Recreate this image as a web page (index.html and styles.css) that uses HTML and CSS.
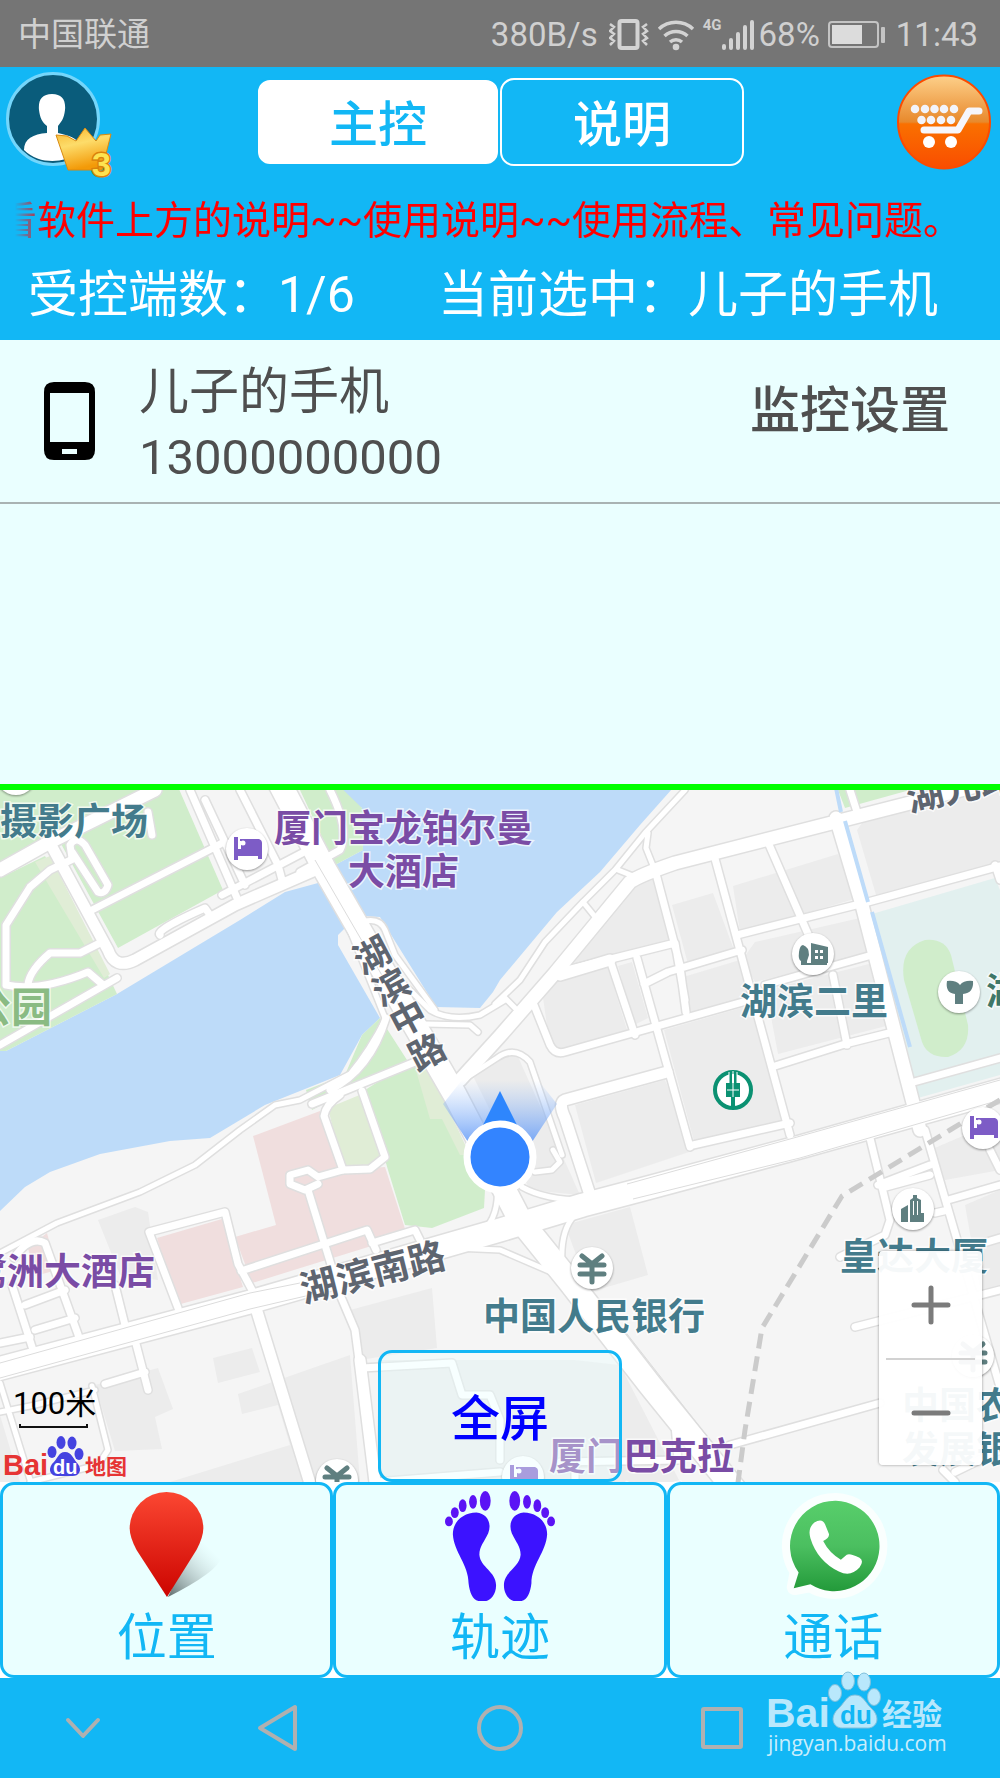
FILE: index.html
```html
<!DOCTYPE html>
<html lang="zh-CN">
<head>
    <meta charset="UTF-8">
    <meta name="viewport" content="width=device-width, initial-scale=1.0">
    <title>主控</title>
    <link rel="stylesheet" href="styles.css">
</head>
<body>
<div class="app">

    <div class="status-bar">
        <span class="carrier">中国联通</span>
        <span>380B/s</span>
        <svg class="vibrate" width="40" height="32" viewBox="0 0 40 32">
            <rect x="10.500" y="2" width="18" height="27" rx="2" fill="none" stroke="#d3d3d3" stroke-width="4"/>
            <path d="M1 5l4 3-4 4 4 3-4 4 4 3-4 4M38 5l-4 3 4 4-4 3 4 4-4 3 4 4" fill="none" stroke="#d3d3d3" stroke-width="2.500"/>
        </svg>
        <svg class="wifi" width="38" height="32" viewBox="0 0 38 32">
            <g fill="none" stroke="#d3d3d3" stroke-width="3.500">
                <path d="M2 10a25 25 0 0 1 34 0"/>
                <path d="M7.500 17a17 17 0 0 1 23 0"/>
                <path d="M13 23a9 9 0 0 1 12 0"/>
            </g>
            <circle cx="19" cy="28" r="3.300" fill="#d3d3d3"/>
        </svg>
        <span class="net">4G</span>
        <svg class="signal" width="32" height="32" viewBox="0 0 32 32">
            <path d="M2 27v2M9 21v8M16 15v14M23 8v21M30 3v26" stroke="#d3d3d3" stroke-width="4" stroke-linecap="round"/>
        </svg>
        <span>68%</span>
        <svg class="battery" width="58" height="28" viewBox="0 0 58 28">
            <rect x="1" y="1" width="49" height="25" rx="3" fill="none" stroke="#c4c4c4" stroke-width="2"/>
            <rect x="4" y="4" width="30" height="19" fill="#dcdcdc"/>
            <rect x="53" y="6" width="4" height="16" rx="1" fill="#c4c4c4"/>
        </svg>
        <span>11:43</span>
    </div>

    <header class="header">
        <div class="top-row">
            <a href="#user" class="avatar" aria-label="用户">
                <svg width="120" height="116" viewBox="0 0 120 116">
                    <defs>
                        <linearGradient id="crown" x1="0" y1="0" x2="0.300" y2="1">
                            <stop offset="0" stop-color="#f7b52c"/>
                            <stop offset="0.450" stop-color="#fddc6a"/>
                            <stop offset="1" stop-color="#f39a08"/>
                        </linearGradient>
                        <clipPath id="face"><circle cx="53" cy="52" r="44"/></clipPath>
                    </defs>
                    <circle cx="53" cy="52" r="45.500" fill="#0a5c7b" stroke="#74d6fb" stroke-width="3"/>
                    <path clip-path="url(#face)" fill="#fff" d="M52 27c10 0 14 6 13 16-1 9-4 12-7 16v7c11 3 19 4 22 13l-4 8c-10 8-36 12-52-4 0-11 9-16 23-17v-7c-5-4-7-8-8-16-1-10 3-16 13-16z"/>
                    <path fill="url(#crown)" stroke="#d88a10" stroke-width="1" d="M56 68l11 1 9 5 9-13 11 13 4-6 11-1-9 36H68z"/>
                    <text x="92" y="109" class="rank">3</text>
                </svg>
            </a>
            <nav class="tabs">
                <button type="button" class="tab active">主控</button>
                <button type="button" class="tab">说明</button>
            </nav>
            <a href="#shop" class="cart" aria-label="购物车">
                <svg width="94" height="96" viewBox="0 0 94 96">
                    <defs>
                        <linearGradient id="orange" x1="0" y1="0" x2="0" y2="1">
                            <stop offset="0" stop-color="#fdd08a"/>
                            <stop offset="0.500" stop-color="#e8892c"/>
                            <stop offset="0.520" stop-color="#fa7000"/>
                            <stop offset="1" stop-color="#f94d00"/>
                        </linearGradient>
                    </defs>
                    <ellipse cx="47" cy="48" rx="46" ry="46.500" fill="url(#orange)" stroke="#fb4b00" stroke-width="2"/>
                    <path d="M27 56h34l11-19h10" fill="none" stroke="#f6f6fb" stroke-width="7" stroke-linecap="round" stroke-linejoin="round"/>
                    <path d="M18 35h.01M28 35h.01M37.500 35h.01M47 35h.01M57 35h.01M24.500 46h.01M34 46h.01M44 46h.01M54 46h.01" stroke="#f2f4fb" stroke-width="8.500" stroke-linecap="round"/>
                    <circle cx="32" cy="68" r="6" fill="#fff"/>
                    <circle cx="54" cy="68" r="6" fill="#fff"/>
                </svg>
            </a>
        </div>
        <div class="notice"><p>看软件上方的说明~~使用说明~~使用流程、常见问题。</p></div>
        <div class="info-row">
            <span>受控端数：1/6</span>
            <span>当前选中：儿子的手机</span>
        </div>
    </header>

    <main class="main">
        <ul class="devices">
            <li class="device">
                <svg class="phone" width="51" height="78" viewBox="0 0 51 78">
                    <path fill="#000" fill-rule="evenodd" d="M10 0h31q10 0 10 10v58q0 10-10 10H10Q0 78 0 68V10Q0 0 10 0zM6 11v49h39V11zM18 67v5h15v-5z"/>
                </svg>
                <div class="device-text">
                    <div>儿子的手机</div>
                    <div class="number">13000000000</div>
                </div>
                <button type="button" class="setting">监控设置</button>
            </li>
        </ul>

        <section class="map">
            <svg class="map-canvas" viewBox="0 790 1000 692" preserveAspectRatio="xMidYMid slice">
                <defs>
                    <g id="thin">
                        <path d="M0 1253L57 1223 140 1192 195 1165 240 1130 275 1105 300 1100 350 1074Q370 1050 386 1018"/>
                        <path d="M495 1004L520 980 545 942 583 902 615 870 645 833 685 790"/>
                        <path d="M618 870L638 878M583 902L596 918M505 998L515 1008M648 833L646 848 654 868"/>
                        <path d="M325 865L380 960 430 1010Q450 1022 480 1015L505 1000"/>
                        <path d="M365 921Q380 918 385 930L395 955 435 1010"/>
                        <path d="M553 1150L560 1162 552 1170 535 1172"/>
                        <path d="M463 1080L497 1058Q515 1045 530 1062L562 1155"/>
                        <path d="M522 1187Q545 1200 585 1200M575 1215Q560 1230 562 1265M432 1247L500 1250 565 1278"/>
                        <path d="M497 1185Q500 1220 478 1235M350 930L385 1018M425 1024L470 1025 478 1032"/>
                        <path d="M0 1412L35 1405 95 1390M0 1383L32 1486M92 1386L108 1450 98 1465 30 1482"/>
                    </g>
                    <g id="minor">
                        <path d="M6 985V925L30 887 50 870 75 858M6 985Q40 992 88 972L102 984M28 984Q30 970 50 953L80 953 102 942M0 1045L117 978"/>
                        <path d="M72 858L70 845Q76 835 85 845L108 885Q105 895 98 892L72 852M92 910L215 847 222 843M148 812L152 835"/>
                        <path d="M190 790L237 898M240 790L278 865 282 880M205 800L245 885M222 895L308 850M160 935Q155 930 205 908L212 918M330 790Q350 830 340 850L300 872"/>
                        <path d="M386 1018Q370 1070 330 1090M312 1104L415 1062M362 1091L385 1157 370 1169 343 1170 324 1116Q326 1104 340 1095"/>
                        <path d="M343 1170L318 1177 308 1170 290 1175 290 1184 305 1190 318 1184M308 1190L341 1297 355 1330 375 1482"/>
                        <path d="M178 1308L149 1232 225 1212 238 1264 252 1290M241 1271L367 1230 376 1250M372 1243L415 1230 420 1240"/>
                        <path d="M14 1258Q30 1235 45 1243L80 1340M12 1285L33 1350M25 1305L65 1290M35 1330L75 1318M0 1343L30 1337M115 1285L125 1325"/>
                        <path d="M135 1340L148 1390M105 1384L145 1372M362 1368L452 1363 462 1395 490 1395 500 1420 500 1460"/>
                        <path d="M655 870L680 965M714 855L790 1135M767 840L815 950M555 973L675 943 685 1000M610 960L635 1035M637 958L690 1147M644 984L668 972 742 950M680 967L686 1012"/>
                        <path d="M737 935L868 902 1000 866M532 1000L550 1045Q555 1055 565 1052L750 1000M765 985L872 955M833 975L847 1045M775 1066L845 1044 893 1032M693 1145L790 1123M914 1082L1000 1058"/>
                        <path d="M995 865L1000 880M850 790L858 815M868 1130L890 1220 885 1235 840 1257M878 1185L930 1165M882 1188L930 1175M925 1130L1000 1387M948 1200L1000 1185M935 1213L948 1210M960 1250L1000 1238M855 1327L1000 1290"/>
                        <path d="M730 1445L880 1403M680 1460L560 1462M675 1425L678 1460M943 1470L955 1482M955 1472L1000 1450M990 1150L1000 1170M575 1478V1460M375 1482L500 1472"/>
                    </g>
                    <g id="street">
                        <path d="M667 1072L565 1100Q558 1103 565 1118L590 1195M560 975L610 960M255 1305L312 1490M360 1360L375 1482"/>
                        <path d="M51 845L108 950Q115 970 135 960L235 905 320 868"/>
                    </g>
                    <g id="avenue">
                        <path d="M0 870L50 842 155 790M460 1080L500 1036 555 973 630 882Q640 875 675 863L1000 780M836 818L862 905 920 1130"/>
                    </g>
                    <g id="main-road">
                        <path d="M278 780L325 870 455 1095 520 1220 570 1282 650 1385 735 1490"/>
                        <path d="M-10 1371L250 1302 500 1230 583 1205 640 1190 800 1147 1010 1088"/>
                    </g>
                    <g id="bed">
                        <circle r="21" class="pin"/>
                        <path d="M-13-12h4v12h3v-8h-1V-10H12q3 1 3 4v16h-4V7H-9v4h-4z"/>
                        <circle cx="-4" cy="-6" r="2.500" fill="#fff"/>
                    </g>
                    <g id="yen">
                        <circle r="21" class="pin"/>
                        <path d="M-10-12L0-4 10-12M0-4V14M-12-3H12M-12 6H12" class="yen-line"/>
                    </g>
                    <linearGradient id="beam" x1="0" y1="0" x2="0" y2="1">
                        <stop offset="0" stop-color="#8fb9f8" stop-opacity="0"/>
                        <stop offset="1" stop-color="#6ca0f7" stop-opacity="0.900"/>
                    </linearGradient>
                </defs>

                <rect x="-500" y="500" width="2000" height="1500" fill="#f5f5f5"/>

                <!-- water -->
                <g fill="#bddbf9">
                    <path d="M318 883L285 892 240 920 117 994 6 1051H-500V1211H0L25 1187 50 1172 100 1154 170 1141 210 1138 265 1105 340 1075 362 1035 380 1018 338 945 338 935 348 925z"/>
                    <path d="M333 780V790L362 808 363 850 335 865 363 916 380 917 436 1007 480 1008 493 992 500 980 557 912 600 872 640 825 680 780z"/>
                </g>

                <!-- parks -->
                <g fill="#d0edcb">
                    <path d="M0 780H175L223 890 118 948 60 842 0 870z"/>
                    <path d="M0 878L45 856 108 975 117 994 6 1051H0z"/>
                    <path d="M320 780H333L362 808 363 850 335 865 300 790z"/>
                    <path d="M380 1018L362 1035 345 1075 306 1090 312 1110 407 1060z"/>
                    <path d="M365 1090L413 1060 465 1155 485 1190 484 1208 432 1228 405 1225 388 1170z"/>
                    <path d="M838 790L845 808 910 790z"/>
                </g>
                <g fill="#e0edd6">
                    <path d="M35 862L50 856 110 974 104 978z"/>
                    <path d="M328 1108L362 1094 385 1155 370 1167 343 1170z"/>
                    <path d="M413 1060L430 1070 470 1155 460 1155 442 1119 430 1119z"/>
                </g>
                <path fill="#e2f0ef" d="M872 914L995 878 1000 890 1500 700V1075L1000 1075 918 1098z"/>
                <path fill="#d0edcb" d="M925 940Q945 938 951 955L968 1025Q970 1050 948 1057 928 1058 922 1042L904 980Q899 948 925 940z"/>

                <!-- built-up areas -->
                <g fill="#f0dede">
                    <path d="M253 1136L320 1111 343 1170 385 1167 407 1235 252 1283 235 1237 276 1225z"/>
                    <path d="M157 1238L222 1219 243 1287 177 1305zM28 1248L47 1233 57 1270 35 1276z"/>
                </g>
                <g fill="#ececec">
                    <path d="M632 887L653 879 673 940 565 970zM672 905L713 893 734 950 688 964zM733 886L838 854 858 898 740 932zM540 978L607 965 628 1033 560 1052 550 1045z"/>
                    <path d="M857 830L870 812 1000 790V862L876 895zM742 960L755 942 860 918 870 953 755 982zM680 978L740 960 750 998 690 1012zM766 990L873 963 890 1025 778 1054zM664 1030L755 1004 790 1122 695 1145z"/>
                    <path d="M575 1105L665 1080 695 1150 596 1183zM618 966L632 962 648 1018 634 1025zM470 1070L515 1050 580 1195 530 1190zM565 1225L630 1207 648 1275 590 1292z"/>
                    <path d="M98 1220L135 1207 148 1212 158 1280 120 1275zM95 1385L158 1368 173 1409 155 1417 162 1449 115 1451zM213 1358L252 1348 260 1372 218 1383zM238 1394L350 1355 360 1482H170L290 1445 278 1405 242 1414z"/>
                    <path d="M350 1310L432 1288 437 1348 360 1360zM380 1360H575L620 1365 680 1482H375zM0 1415L20 1482H0zM930 1150L1000 1120V1170L945 1180zM965 1205L1000 1190V1290L980 1290z"/>
                </g>

                <!-- every road is drawn twice: grey casing, then white fill -->
                <g class="roads casing">
                    <use href="#thin" stroke-width="8"/>
                    <use href="#minor" stroke-width="10"/>
                    <use href="#street" stroke-width="14"/>
                    <use href="#avenue" stroke-width="16"/>
                    <use href="#main-road" stroke-width="26"/>
                </g>
                <g class="roads">
                    <use href="#thin" stroke-width="5"/>
                    <use href="#minor" stroke-width="7"/>
                    <use href="#street" stroke-width="11"/>
                    <use href="#avenue" stroke-width="13"/>
                    <use href="#main-road" stroke-width="23"/>
                </g>
                <path d="M836 788L841 812M845 821L868 902M872 912L910 1047" fill="none" stroke="#bddbf9" stroke-width="4"/>
                <path d="M315 860L405 1015M0 1363L250 1293 300 1283M0 1378L250 1309 310 1295M627 1184L790 1139 1000 1080M633 1199L800 1158 1000 1100M620 1325L710 1440" fill="none" stroke="#dcdcdc"/>
                <path d="M1000 1100L950 1130 842 1196 762 1328 745 1430 737 1490" fill="none" stroke="#cbcbcb" stroke-width="5" stroke-dasharray="15 8"/>

                <!-- places -->
                <circle cx="16" cy="774" r="21" class="pin"/>
                <use href="#bed" x="247" y="849" fill="#7d5cc6"/>
                <use href="#bed" x="983" y="1128" fill="#7d5cc6"/>
                <use href="#bed" x="523" y="1477" fill="#7d5cc6"/>
                <use href="#yen" x="592" y="1268"/>
                <use href="#yen" x="337" y="1480"/>
                <use href="#yen" x="973" y="1356"/>
                <g fill="#5f7f80">
                    <circle cx="813" cy="954" r="21" class="pin"/>
                    <path fill-rule="evenodd" d="M801 965V961Q798 960 799 952 800 945 803 945 809 947 809 955L807 961V963H811V943L828 947V963H827V965zM815 950V953H818V950zM820 950V953H823V950zM815 956V959H818V956zM820 956V959H823V956z"/>
                    <circle cx="959" cy="992" r="21" class="pin"/>
                    <path d="M947 981Q956 980 960 985 964 980 973 981 974 993 963 994V1004H955V994Q945 993 947 981z"/>
                    <circle cx="913" cy="1209" r="21" class="pin"/>
                    <path fill-rule="evenodd" d="M901 1222V1209L908 1205V1222zM910 1222V1200L913 1198V1195H917V1198L921 1200V1213H924V1222zM913 1201V1215H914V1201zM917 1201V1215H918V1201z"/>
                </g>
                <circle cx="733" cy="1090" r="18" fill="#fff" stroke="#0b9172" stroke-width="4"/>
                <path d="M726 1083H729V1071H732V1083H734V1071H737V1083H740V1097H735V1109H731V1097H726z" fill="#0b9172"/>
                <path d="M733 1071V1097M727 1090H739M729 1072V1083M737 1072V1083" fill="none" stroke="#fff" stroke-width="1"/>

                <g class="label">
                    <text x="0" y="835" fill="#437b8c">摄影广场</text>
                    <text x="274" y="842" fill="#7a4ca5">厦门宝龙铂尔曼</text>
                    <text x="348" y="885" fill="#7a4ca5">大酒店</text>
                    <text x="740" y="1015" fill="#437b8c">湖滨二里</text>
                    <text x="986" y="1005" fill="#3f7768">湖滨</text>
                    <text x="-30" y="1285" fill="#7a4ca5">鹭洲大酒店</text>
                    <text x="483" y="1330" fill="#437b8c">中国人民银行</text>
                    <text x="840" y="1270" fill="#437b8c">皇达大厦</text>
                    <text x="549" y="1470" fill="#7a4ca5">厦门巴克拉</text>
                    <text x="585" y="1514" fill="#7a4ca5">大酒店</text>
                    <text x="902" y="1419" fill="#437b8c">中国农业</text>
                    <text x="902" y="1463" fill="#437b8c">发展银行</text>
                    <text x="-30" y="1022" class="park-name">公园</text>
                    <text x="304" y="1303" fill="#5e6570" transform="rotate(-14 304 1303)">湖滨南路</text>
                    <text x="910" y="812" fill="#5e6570" transform="rotate(-13 910 812)">湖光路</text>
                    <g class="road-name">
                        <text transform="translate(372 955) rotate(-28)" y="13">湖</text>
                        <text transform="translate(391 987) rotate(-28)" y="13">滨</text>
                        <text transform="translate(408 1018) rotate(-28)" y="13">中</text>
                        <text transform="translate(427 1052) rotate(-28)" y="13">路</text>
                    </g>
                </g>

                <!-- own position with heading -->
                <path fill="url(#beam)" d="M443 1104L462 1080H538L557 1104 532 1142H468z"/>
                <path fill="#2e86fd" d="M500 1091L517 1125H483z"/>
                <circle cx="500" cy="1157" r="33" fill="#3384ff" stroke="#fff" stroke-width="7"/>
            </svg>

            <div class="scale">
                <span>100米</span>
                <div class="ruler"></div>
                <svg width="126" height="42" viewBox="0 0 126 42">
                    <g fill="#4543e0">
                        <ellipse cx="48" cy="17" rx="4.500" ry="6"/>
                        <ellipse cx="57" cy="7.500" rx="4.500" ry="6.500"/>
                        <ellipse cx="68" cy="8" rx="4.500" ry="6.500"/>
                        <ellipse cx="75" cy="19" rx="4.500" ry="6"/>
                        <path d="M61 17c7 0 8 7 13 12 5 7 0 13-7 12h-12c-7 1-12-5-7-12 6-5 6-12 13-12z"/>
                    </g>
                    <text x="-1" y="40" class="logo-red logo-latin">Bai</text>
                    <text x="49" y="39" class="logo-du">du</text>
                    <text x="81" y="39" class="logo-red logo-cjk">地图</text>
                </svg>
            </div>

            <div class="zoom">
                <button type="button" aria-label="放大"><svg width="40" height="40" viewBox="0 0 40 40"><path d="M20 3v34M3 20h34" stroke="#7b7b7b" stroke-width="5" stroke-linecap="round"/></svg></button>
                <button type="button" aria-label="缩小"><svg width="40" height="40" viewBox="0 0 40 40"><path d="M3 20h34" stroke="#7b7b7b" stroke-width="5" stroke-linecap="round"/></svg></button>
            </div>

            <button type="button" class="fullscreen">全屏</button>
        </section>
    </main>

    <div class="actions">
        <button type="button" class="action">
            <svg width="112" height="112" viewBox="0 0 112 112">
                <defs>
                    <linearGradient id="red" x1="0" y1="0" x2="0" y2="1">
                        <stop offset="0" stop-color="#fb4732"/>
                        <stop offset="1" stop-color="#cc0400"/>
                    </linearGradient>
                    <linearGradient id="shade" x1="0" y1="1" x2="1" y2="0">
                        <stop offset="0" stop-color="#5c6a6a"/>
                        <stop offset="0.850" stop-color="#c8dada" stop-opacity="0"/>
                    </linearGradient>
                </defs>
                <path fill="url(#shade)" d="M57 108L82 54Q110 50 111 68 108 82 57 108z"/>
                <path fill="url(#red)" d="M56 108L25 60Q18 47 18 38A37.500 37 0 0 1 93 38Q93 47 86 60z"/>
            </svg>
            <span>位置</span>
        </button>
        <button type="button" class="action">
            <svg width="112" height="112" viewBox="0 0 112 112">
                <defs>
                    <g id="foot">
                        <path fill="#3c12ff" d="M32 22C43 23 48 33 44 43 40 52 35 56 35 65 36 78 52 82 52 96 52 106 46 111 42 112H34C28 111 25 103 24 94 24 75 9 62 8 44 8 31 19 22 32 22z"/>
                        <g fill="#5b13f5">
                            <ellipse cx="41" cy="10" rx="5.500" ry="10"/>
                            <ellipse cx="28.500" cy="11" rx="4" ry="7"/>
                            <ellipse cx="18" cy="15" rx="4" ry="6.500"/>
                            <ellipse cx="10" cy="22" rx="4" ry="5.500"/>
                            <ellipse cx="4" cy="31" rx="4" ry="5"/>
                        </g>
                    </g>
                </defs>
                <use href="#foot"/>
                <use href="#foot" transform="translate(112 0) scale(-1 1)"/>
            </svg>
            <span>轨迹</span>
        </button>
        <button type="button" class="action">
            <svg width="112" height="112" viewBox="0 0 112 112">
                <defs>
                    <linearGradient id="green" x1="0" y1="0" x2="0" y2="1">
                        <stop offset="0" stop-color="#58ce6b"/>
                        <stop offset="0.500" stop-color="#4bbf60"/>
                        <stop offset="1" stop-color="#239a3a"/>
                    </linearGradient>
                </defs>
                <path d="M59 10A46 46 0 1 1 33 95L17 98 20 82A46 46 0 0 1 59 10z" fill="#fff" stroke="#fafffe" stroke-width="16" stroke-linejoin="round"/>
                <path d="M59 10A46 46 0 1 1 33 95L16 99 21 83A46 46 0 0 1 59 10z" fill="url(#green)"/>
                <path fill="#fff" d="M37 32Q45 27 48 34L52 44Q52 48 46 51 52 63 64 70L70 65Q73 63 83 68 88 71 83 78 74 88 62 82 40 71 33 48 30 38 37 32z"/>
            </svg>
            <span>通话</span>
        </button>
    </div>

    <footer class="nav-bar">
        <button type="button" aria-label="收起"><svg width="48" height="48" viewBox="0 0 48 48"><path d="M9 16l15 16 15-16"/></svg></button>
        <button type="button" aria-label="返回"><svg width="48" height="48" viewBox="0 0 48 48"><path d="M41 3v42L6 24z"/></svg></button>
        <button type="button" aria-label="主页"><svg width="48" height="48" viewBox="0 0 48 48"><circle cx="24" cy="24" r="21"/></svg></button>
        <button type="button" aria-label="最近任务"><svg width="48" height="48" viewBox="0 0 48 48"><rect x="5" y="5" width="38" height="38" rx="1"/></svg></button>
        <svg class="watermark" width="190" height="90" viewBox="0 0 190 90">
            <g fill="#b9e8fc" stroke="#7fc0dc">
                <ellipse cx="69" cy="23" rx="6.500" ry="8.500"/>
                <ellipse cx="82" cy="11" rx="6.500" ry="9"/>
                <ellipse cx="98" cy="12" rx="6.500" ry="9"/>
                <ellipse cx="108" cy="27" rx="6.500" ry="8.500"/>
                <path d="M89 25c9 0 10 8 18 15 8 9 3 19-7 18H78c-10 1-15-9-7-18 8-7 9-15 18-15z"/>
            </g>
            <text x="0" y="57" class="wm-latin">Bai</text>
            <text x="74" y="54" class="wm-du">du</text>
            <text x="116" y="55" class="wm-cjk">经验</text>
            <text x="2" y="81" class="wm-url">jingyan.baidu.com</text>
        </svg>
    </footer>

</div>
</body>
</html>
```
FILE: styles.css
```css
* { box-sizing: border-box; }
body { margin: 0; background-color: #fff; font-family: Roboto, "Noto Sans CJK SC", sans-serif; }
button { margin: 0; padding: 0; border: none; background: none; font-family: inherit; cursor: pointer; }
svg { display: block; }
.app { display: flex; flex-direction: column; min-height: 100vh; }

.status-bar { display: flex; align-items: center; height: 67px; padding: 2px 22px 0 18px; background-color: #757575; color: #d0d0d0; font-size: 33px; line-height: 40px; }
.carrier { margin-right: auto; }
.vibrate { margin-left: 11px; }
.wifi { margin-left: 8px; }
.net { align-self: flex-start; margin: 12px 0 0 8px; font-size: 15px; line-height: 22px; font-weight: bold; }
.signal { margin: 0 5px 0 0; }
.battery { margin: 0 10px 0 8px; }

.header { height: 273px; background-color: #12b7f5; color: #fff; }
.top-row { display: flex; justify-content: space-between; height: 123px; }
.avatar, .cart { flex: 0 0 120px; }
.cart { padding: 7px 8px 0 17px; }
.rank { font: bold 34px "Liberation Sans", sans-serif; fill: #fde350; stroke: #d9820c; stroke-width: 3px; paint-order: stroke; }
.tabs { display: flex; margin-top: 11px; }
.tab { width: 244px; height: 88px; padding-top: 7px; border: 2px solid #fff; border-radius: 14px; color: #fff; font-size: 49px; font-weight: 500; line-height: 60px; }
.tab.active { border: 2px solid #12b7f5; background-color: #fff; color: #12b7f5; }
.notice { height: 68px; margin: 0 48px 0 15px; overflow: hidden; color: #f00; font-size: 39px; line-height: 62px; white-space: nowrap; -webkit-mask-image: linear-gradient(to right, transparent, #000 30px); mask-image: linear-gradient(to right, transparent, #000 30px); }
.notice p { margin: 0 0 0 -17px; }
.info-row { display: flex; justify-content: space-between; padding: 0 62px 0 28px; font-size: 50px; line-height: 74px; }

.main { flex: 1; display: flex; flex-direction: column; }
.devices { height: 450px; margin: 0; padding: 0; list-style: none; background-color: #eaffff; border-bottom: 6px solid #0f0; }
.device { display: flex; align-items: center; height: 164px; padding: 0 50px 0 44px; border-bottom: 2px solid #a9b3b3; color: #4f4f4f; font-size: 50px; }
.device-text { flex: 1; margin-left: 44px; padding-top: 8px; line-height: 66px; }
.number { font-size: 49px; }
.setting { margin-bottom: 20px; color: #4f4f4f; font-size: 50px; font-weight: 500; line-height: 60px; }

.map { position: relative; flex: 1; min-height: 600px; overflow: hidden; }
.map-canvas { position: absolute; top: 0; left: 0; width: 100%; height: 100%; }
.roads { fill: none; stroke: #fff; stroke-linecap: round; stroke-linejoin: round; }
.casing { stroke: #dfdfdf; }
.pin { fill: #fff; filter: drop-shadow(0 1px 1px rgba(0, 0, 0, 0.4)); }
.yen-line { fill: none; stroke: #5f7f80; stroke-width: 5px; stroke-linecap: round; }
.label { font-size: 37px; font-weight: 700; stroke: #fff; stroke-width: 3px; stroke-opacity: 0.7; paint-order: stroke; }
.park-name { font-size: 41px; fill: #8abb83; }
.road-name { font-size: 36px; fill: #5e6570; text-anchor: middle; }

.scale { position: absolute; left: 4px; bottom: 5px; color: #000; font-size: 31px; line-height: 40px; }
.scale span { margin-left: 9px; }
.ruler { width: 69px; height: 4px; margin: 0 0 7px 15px; border: 2px solid #111; border-top: none; }
.logo-latin { font: bold 29px "Liberation Sans", sans-serif; }
.logo-cjk { font-size: 21px; font-weight: 700; }
.logo-red { fill: #e63434; }
.logo-du { font: bold 20px "Liberation Sans", sans-serif; fill: #fff; }

.zoom { position: absolute; right: 18px; bottom: 17px; width: 103px; padding: 0 7px; border-radius: 4px; background-color: rgba(255, 255, 255, 0.95); box-shadow: 0 0 3px rgba(0, 0, 0, 0.4); }
.zoom button { display: flex; align-items: center; justify-content: center; width: 100%; height: 107px; }
.zoom button + button { border-top: 2px solid #d2d2d2; }

.fullscreen { position: absolute; bottom: 0; left: 50%; width: 244px; height: 132px; margin-left: -122px; padding-top: 8px; border: 3px solid #12b7f5; border-radius: 14px; background-color: rgba(234, 255, 255, 0.4); color: #00f; font-size: 49px; font-weight: 500; line-height: 60px; }

.actions { display: flex; height: 196px; }
.action { flex: 1; display: flex; flex-direction: column; align-items: center; padding-top: 6px; border: 3px solid #12b7f5; border-radius: 14px; background-color: #eaffff; color: #12b7f5; font-size: 50px; line-height: 74px; }

.nav-bar { position: relative; display: grid; grid-template-columns: 3fr 4fr 4fr 4fr 3fr; height: 100px; background-color: #12b7f5; }
.nav-bar button { display: flex; align-items: center; justify-content: center; }
.nav-bar button svg { fill: none; stroke: #b0b0b0; stroke-width: 4px; stroke-linecap: round; stroke-linejoin: round; }
.watermark { position: absolute; right: 44px; top: -8px; }
.wm-latin { font: bold 41px "Liberation Sans", sans-serif; fill: #b9e8fc; }
.wm-du { font: bold 26px "Liberation Sans", sans-serif; fill: #12b7f5; }
.wm-cjk { font-size: 30px; font-weight: 700; fill: #b9e8fc; }
.wm-url { font: 21px "Open Sans", sans-serif; fill: #c9edfc; }
```
